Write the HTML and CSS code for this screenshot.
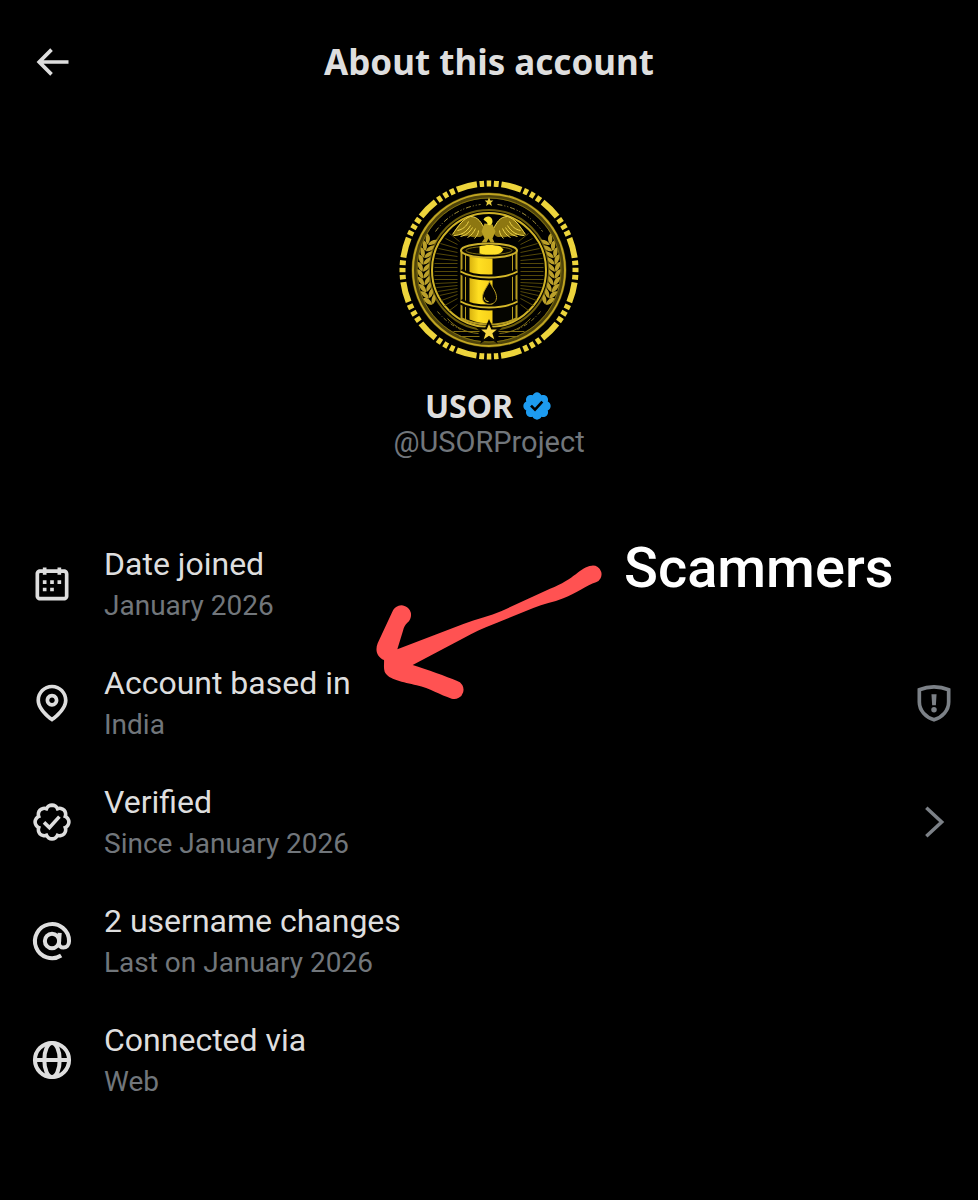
FILE: index.html
```
<!DOCTYPE html>
<html lang="en">
  <head>
    <meta charset="UTF-8" />
    <meta name="viewport" content="width=device-width, initial-scale=1.0" />
    <title>About this account</title>
    <link rel="stylesheet" href="styles.css">
  </head>
  <body>
    <header class="topbar">
      <a class="back" href="#" aria-label="Back">
        <svg class="icon" viewBox="0 0 24 24"><path d="M7.414 13l5.043 5.04-1.414 1.42L3.586 12l7.457-7.46 1.414 1.42L7.414 11H21v2H7.414z"/></svg>
      </a>
      <h1>About this account</h1>
    </header>

    <main>
      <section class="profile">
        <svg class="avatar" viewBox="9.500 9.500 180 180" role="img" aria-label="USOR">
          <defs>
            <linearGradient id="gold" x1="0" y1="0" x2="1" y2="0">
              <stop offset="0" stop-color="#d9b30e"/>
              <stop offset="0.4" stop-color="#ffdf22"/>
              <stop offset="1" stop-color="#f6cf18"/>
            </linearGradient>
            <path id="leaf" d="M33 100c-4-2-5-6-4.500-10 4 1 6 5 4.500 10zM33.500 100c0-4 3-7 6.500-8 0 5-2 7-6.500 8z"/>
            <g id="laurel">
              <use href="#leaf" transform="rotate(23 99.500 99.500)"/>
              <use href="#leaf" transform="rotate(17 99.500 99.500)"/>
              <use href="#leaf" transform="rotate(11 99.500 99.500)"/>
              <use href="#leaf" transform="rotate(5 99.500 99.500)"/>
              <use href="#leaf" transform="rotate(-1 99.500 99.500)"/>
              <use href="#leaf" transform="rotate(-7 99.500 99.500)"/>
              <use href="#leaf" transform="rotate(-13 99.500 99.500)"/>
              <use href="#leaf" transform="rotate(-19 99.500 99.500)"/>
              <use href="#leaf" transform="rotate(-25 99.500 99.500)"/>
              <use href="#leaf" transform="rotate(-31 99.500 99.500)"/>
            </g>
            <path id="rays" d="M56 68l12 6M51 73l17 5M49 78l19 4M47 83l21 3M46 88l22 2M45 93h23M45 97h23M45 101h23M45 105h23M45 109h23M46 113l22-1M47 117l21-2M48 121l20-3M50 125l18-4M52 130l16-6M55 135l13-7M60 140l8-6M60 63l10 8"/>
            <g id="wing">
              <path fill="#8d7711" d="M96 59c-3-4-6-13-15-13-7 1-12 8-18 18 3 1 6 1 8 0 2 2 6 2 8 1 3 2 6 2 8 1 4 2 8-1 9-7z"/>
              <path fill="none" stroke="#f0d64a" d="M95 58c-3-5-6-12-14-12-7 2-12 9-18 18M64 65c7 0 13-3 17-10M71 66c5-1 9-4 12-9M78 67c4-2 6-5 8-9M85 68c2-2 4-5 4-8M68 60c5-1 9-4 11-9"/>
            </g>
          </defs>
          <circle class="coin-edge" cx="99.500" cy="99.500" r="86.500" pathLength="360" transform="rotate(-91.500 99.500 99.500)"/>
          <g fill="none">
            <circle cx="99.500" cy="99.500" r="74.500" stroke="#4d420a" stroke-width="6"/>
            <circle cx="99.500" cy="99.500" r="76" stroke="#c0a522" stroke-width="2"/>
            <circle cx="99.500" cy="99.500" r="72" stroke="#81700f" stroke-width="1"/>
            <circle cx="99.500" cy="99.500" r="60" stroke="#6b5c0c" stroke-width="2"/>
            <circle cx="99.500" cy="99.500" r="57" stroke="#cfb226" stroke-width="2"/>
            <path d="M46 61A66 66 0 0 1 91 34M108 34a66 66 0 0 1 45 27" stroke="#a8953c" stroke-dasharray="5 2 1 2 1 2"/>
            <path d="M48 141a66 66 0 0 0 23 18M151 141a66 66 0 0 1-23 18" stroke="#8a7928" stroke-dasharray="4 2 1 2"/>
            <path d="M58 148c8 9 18 14 31 15M141 148c-8 9-18 14-31 15M64 161h26M109 161h26M70 166h20M109 166h20" stroke="#857114"/>
            <use href="#rays" stroke="#534709"/>
            <use href="#rays" stroke="#534709" transform="matrix(-1 0 0 1 199 0)"/>
          </g>
          <g fill="#bba02a">
            <use href="#laurel"/>
            <use href="#laurel" transform="matrix(-1 0 0 1 199 0)"/>
          </g>
          <path fill="#e6cd3e" d="M99.500 27l1.300 3h3l-2.300 2.200.9 3.300-2.900-1.900-2.900 1.900.9-3.300-2.300-2.200h3z"/>
          <use href="#wing"/>
          <use href="#wing" transform="matrix(-1 0 0 1 199 0)"/>
          <path fill="#b89f22" d="M95 53l8 1 3 7-3 7 2 4h-4l-2-4-2 4h-5l3-4-3-7z"/>
          <path fill="#f6e034" d="M94 49c3-5 9-3 9 2 0 3-3 5-5 3 0-3-2-3-4-5z"/>
          <!-- oil barrel -->
          <path fill="#050500" stroke="#b69b20" stroke-width="2" d="M72 80v68c16 8 39 8 55 0V80z"/>
          <path fill="url(#gold)" d="M80 85c8 2 15 3 23 3v65c-8 0-16-1-23-4z"/>
          <path stroke="#b69b20" d="M76 84v66M123 84v66" fill="none"/>
          <ellipse cx="99.500" cy="80" rx="28" ry="7" fill="#0a0800" stroke="#cbb02b" stroke-width="2"/>
          <ellipse cx="99.500" cy="80" rx="23" ry="4" fill="#0a0800" stroke="#80700f"/>
          <path fill="#ffe129" d="M90 76c5-2 15-2 21 0l3 3c-2 4-5 5-11 5-5 0-10 0-13-1z"/>
          <g fill="none">
            <path d="M71 101c14 8 43 8 57 0M71 131c14 8 43 8 57 0" stroke="#070500" stroke-width="6"/>
            <path d="M71 101c14 8 43 8 57 0M71 131c14 8 43 8 57 0" stroke="#d6b929" stroke-width="2"/>
          </g>
          <path fill="#050400" stroke="#b69b20" d="M100 111c-2 5-7 10-7 16 0 9 14 9 14 0 0-6-5-11-7-16z"/>
          <path fill="none" stroke="#ead238" d="M95 127c0 3 2 4 4 4"/>
          <path fill="#f8d845" stroke="#090700" stroke-width="2" d="M99.500 151l3 7h7.500l-6 5 2.500 8-7-4.500-7 4.500 2.500-8-6-5h7.500z"/>
        </svg>
        <h2 class="name">
          USOR
          <svg class="badge" viewBox="0 0 22 22" role="img" aria-label="Verified account">
            <path id="seal" d="M20.396 11c-.018-.646-.215-1.275-.57-1.816-.354-.54-.852-.972-1.438-1.246.223-.607.27-1.264.14-1.897-.131-.634-.437-1.218-.882-1.687-.47-.445-1.053-.75-1.687-.882-.633-.13-1.29-.083-1.897.14-.273-.587-.704-1.086-1.245-1.44S11.647 1.62 11 1.604c-.646.017-1.273.213-1.813.568s-.969.854-1.24 1.44c-.608-.223-1.267-.272-1.902-.14-.635.13-1.22.436-1.69.882-.445.47-.749 1.055-.878 1.688-.13.633-.08 1.29.144 1.896-.587.274-1.087.705-1.443 1.245-.356.54-.555 1.17-.574 1.817.02.647.218 1.276.574 1.817.356.54.856.972 1.443 1.245-.224.606-.274 1.263-.144 1.896.13.634.433 1.218.877 1.688.47.443 1.054.747 1.687.878.633.132 1.29.084 1.897-.136.274.586.705 1.084 1.246 1.439.54.354 1.17.551 1.816.569.647-.016 1.276-.213 1.817-.567s.972-.854 1.245-1.44c.604.239 1.266.296 1.903.164.636-.132 1.22-.447 1.68-.907.46-.46.776-1.044.908-1.681s.075-1.299-.165-1.903c.586-.274 1.084-.705 1.439-1.246.354-.54.551-1.17.569-1.816z"/>
            <path fill="#000" d="M9.662 14.85l-3.429-3.428 1.293-1.302 2.072 2.072 4.4-4.794 1.347 1.246z"/>
          </svg>
        </h2>
        <p class="handle">@USORProject</p>
      </section>

      <section class="details">
        <ul class="rows">
          <li class="row">
            <svg class="icon" viewBox="0 0 24 24"><path d="M7 4V3h2v1h6V3h2v1h1.500C19.890 4 21 5.120 21 6.500v12c0 1.380-1.110 2.500-2.500 2.500h-13C4.120 21 3 19.880 3 18.500v-12C3 5.120 4.120 4 5.500 4H7zm0 2H5.500c-.27 0-.5.22-.5.5v12c0 .28.23.5.5.5h13c.28 0 .5-.22.5-.5v-12c0-.28-.22-.5-.5-.5H17v1h-2V6H9v1H7V6zm0 6h2v-2H7v2zm0 4h2v-2H7v2zm4-4h2v-2h-2v2zm0 4h2v-2h-2v2zm4-4h2v-2h-2v2z"/></svg>
            <div class="text">
              <p class="label">Date joined</p>
              <p class="value">January 2026</p>
            </div>
          </li>
          <li class="row">
            <svg class="icon" viewBox="0 0 24 24"><path d="M12 7c-1.930 0-3.500 1.570-3.500 3.500S10.070 14 12 14s3.500-1.570 3.500-3.500S13.930 7 12 7zm0 5c-.827 0-1.500-.673-1.500-1.500S11.173 9 12 9s1.500.673 1.500 1.500S12.827 12 12 12zm0-10c-4.687 0-8.500 3.813-8.500 8.500 0 5.967 7.621 11.116 7.945 11.332l.555.370.555-.370c.324-.216 7.945-5.365 7.945-11.332C20.500 5.813 16.687 2 12 2zm0 17.770c-1.665-1.241-6.500-5.196-6.500-9.270C5.500 6.916 8.416 4 12 4s6.500 2.916 6.500 6.500c0 4.073-4.835 8.028-6.500 9.270z"/></svg>
            <div class="text">
              <p class="label">Account based in</p>
              <p class="value">India</p>
            </div>
            <button class="action" type="button" aria-label="Location accuracy">
              <svg class="icon line" viewBox="0 0 24 24">
                <path stroke-width="2" d="M12 3.200c2.900 0 5.600.6 8 1.600v6.700c0 4.600-3.400 8.300-8 9.700-4.600-1.400-8-5.100-8-9.700V4.800c2.400-1 5.100-1.600 8-1.600z"/>
                <path class="solid" d="M10.600 7.200h2.800l-.4 6h-2z"/>
                <circle class="solid" cx="12" cy="15.700" r="1.500"/>
              </svg>
            </button>
          </li>
          <li class="row">
            <svg class="icon line" viewBox="0 0 22 22">
              <use href="#seal" transform="translate(1.100 1.100) scale(.9)" stroke-width="2"/>
              <path stroke-width="1.800" d="M7 11.200l2.700 2.600 5-5.500"/>
            </svg>
            <div class="text">
              <p class="label">Verified</p>
              <p class="value">Since January 2026</p>
            </div>
            <a class="action" href="#" aria-label="Verified details">
              <svg class="icon line" viewBox="0 0 24 24"><path stroke-width="1.900" d="M7.800 4.200l8.400 7.800-8.400 7.800"/></svg>
            </a>
          </li>
          <li class="row">
            <svg class="icon line" viewBox="0 0 24 24">
              <g stroke-width="2.200">
                <circle cx="12" cy="12" r="3.900"/>
                <path d="M16.200 7.600l-.4 5.400c-.1 1.600 1 2.600 2.500 2.600s3-1.300 3-3.600a9.300 9.300 0 1 0-4.300 7.900"/>
              </g>
            </svg>
            <div class="text">
              <p class="label">2 username changes</p>
              <p class="value">Last on January 2026</p>
            </div>
          </li>
          <li class="row">
            <svg class="icon line" viewBox="0 0 24 24">
              <g stroke-width="2.200">
                <circle cx="12" cy="12" r="9.300"/>
                <ellipse cx="12" cy="12" rx="4.200" ry="9.300"/>
                <path d="M2.600 12h18.800"/>
              </g>
            </svg>
            <div class="text">
              <p class="label">Connected via</p>
              <p class="value">Web</p>
            </div>
          </li>
        </ul>

        <!-- hand-drawn note over the list -->
        <div class="note">
          <svg class="note-arrow" viewBox="0 0 840 540" aria-hidden="true">
            <path d="M112 358L310 282C350 267 390 258 425 243L570 176C645 148 660 110 695 107A26 26 0 0 1 708 157C680 165 650 190 610 205C580 217 550 222 520 234L400 283C370 294 340 308 310 325L158 405C200 418 260 440 290 452A28 28 0 0 1 275 506C240 495 210 475 170 466C130 455 85 450 74 425C70 412 73 400 72 390C50 380 45 360 53 340L97 245A29 29 0 1 1 142 278C136 284 132 290 129 302z"/>
          </svg>
          <span class="note-text">Scammers</span>
        </div>
      </section>
    </main>
  </body>
</html>
```
FILE: styles.css
```
* {
  box-sizing: border-box;
}

body {
  margin: 0;
  min-height: 100vh;
  background: #000;
  color: #dedede;
  font-family: Roboto, "Noto Sans", sans-serif;
}

h1,
h2,
p,
ul {
  margin: 0;
  padding: 0;
}

h1,
h2 {
  font-family: "Noto Sans", Roboto, sans-serif;
  font-weight: 700;
}

.icon {
  display: block;
  flex: none;
  width: 44px;
  height: 44px;
  fill: currentColor;
}

.line {
  fill: none;
  stroke: currentColor;
}

.solid {
  fill: currentColor;
  stroke: none;
}

.topbar {
  display: grid;
  grid-template-columns: 44px 1fr 44px;
  align-items: center;
  height: 124px;
  padding: 0 30px;
}

.topbar h1 {
  font-size: 35px;
  line-height: 44px;
  text-align: center;
}

.back {
  color: inherit;
}

.profile {
  display: flex;
  flex-direction: column;
  align-items: center;
  padding-top: 56px;
}

.avatar {
  width: 180px;
  height: 180px;
}

.coin-edge {
  fill: none;
  stroke: #edd43c;
  stroke-width: 6;
  stroke-dasharray: 3 1.8 3.2 1.8 13.6 1.8 3 1.8;
}

.name {
  display: flex;
  align-items: center;
  gap: 8px;
  margin-top: 28px;
  font-size: 32px;
  line-height: 36px;
}

.badge {
  width: 32px;
  height: 32px;
  fill: #1d9bf0;
}

.handle {
  color: #71767b;
  font-size: 29px;
  line-height: 36px;
}

.details {
  position: relative;
  padding: 82px 22px 0 30px;
}

.rows {
  display: flex;
  flex-direction: column;
  gap: 35px;
  list-style: none;
}

.row {
  display: flex;
  align-items: center;
  gap: 30px;
}

.text {
  flex: 1;
}

.label {
  font-size: 32px;
  line-height: 44px;
}

.value {
  color: #71767b;
  font-size: 28px;
  line-height: 40px;
}

.action {
  padding: 0;
  border: 0;
  background: none;
  color: #7c8187;
  cursor: pointer;
}

.note {
  position: absolute;
  top: 70px;
  left: 360px;
  display: flex;
  align-items: flex-start;
  pointer-events: none;
}

.note-arrow {
  width: 280px;
  height: 180px;
  margin-right: -16px;
  fill: #ff5252;
}

.note-text {
  color: #fff;
  font-size: 56px;
  line-height: 76px;
  font-weight: 500;
}
```
